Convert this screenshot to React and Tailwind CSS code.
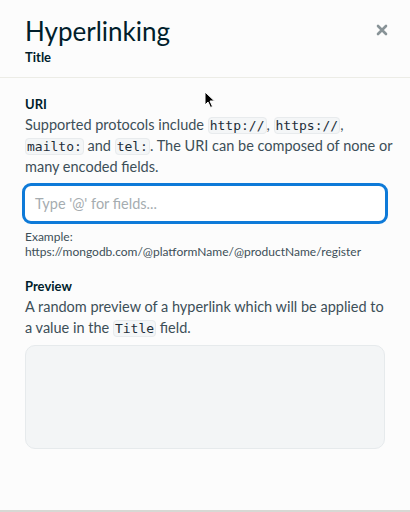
import React from 'react';

const Code = ({ children }) => (
  <code className="rounded-[4px] border border-[#e8ebed] bg-[#f4f6f7] px-[1px] py-0 font-['DejaVu_Sans_Mono',monospace] text-[13px] leading-[18px] text-[#1c2d38]">
    {children}
  </code>
);

const Cursor = () => (
  <svg className="absolute left-[204px] top-[91px]" width="12" height="18" viewBox="0 0 12 18">
    <path d="M1 1 L1 14 L4 11 L6.5 16.5 L8.5 15.5 L6 10 L10.5 10 Z" fill="#000" stroke="#fff" strokeWidth="1" />
  </svg>
);

export default function App() {
  return (
    <div className="relative h-[512px] w-[410px] overflow-hidden border-b-2 border-[#d8d8d4] bg-[#fcfcfc] font-['Lato',sans-serif] text-[#1c2d38]">
      <div className="flex items-start justify-between px-[25px] pt-[15px]">
        <div className="flex flex-col">
          <h1 className="text-[26px] leading-[32px] text-[#001e2b]">Hyperlinking</h1>
          <p className="mt-[2px] text-[13px] font-bold leading-[16px] text-[#001e2b]">Title</p>
        </div>
        <button className="mt-[9px] mr-[-3px] text-[#889397]">
          <svg width="12" height="12" viewBox="0 0 12 12">
            <path d="M2 2 L10 10 M10 2 L2 10" stroke="currentColor" strokeWidth="2.6" strokeLinecap="round" />
          </svg>
        </button>
      </div>

      <div className="mt-[12px] border-t border-[#ecece6]" />

      <div className="flex flex-col px-[25px] pt-[17px]">
        <p className="text-[13px] font-bold leading-[18px] text-[#001e2b]">URI</p>
        <p className="mt-[1px] mr-[-16px] text-[14.5px] leading-[21px] text-[#3d4f58]">
          Supported protocols include <Code>http://</Code>, <Code>https://</Code>, <Code>mailto:</Code> and <Code>tel:</Code>. The URI can be composed of none or many encoded fields.
        </p>

        <div className="mt-[6px] -mx-[3px] flex h-[41px] items-center rounded-[9px] border-[3px] border-[#0e7ad8] bg-white px-[10px]">
          <span className="text-[14.5px] text-[#a5acb0]">Type '@' for fields...</span>
        </div>

        <p className="mt-[5px] text-[12px] leading-[15px] text-[#3d4f58]">Example:</p>
        <p className="text-[12px] leading-[15px] text-[#3d4f58]">https://mongodb.com/@platformName/@productName/register</p>

        <p className="mt-[18px] text-[13px] font-bold leading-[18px] text-[#001e2b]">Preview</p>
        <p className="mt-[1px] text-[14.5px] leading-[21px] text-[#3d4f58]">
          A random preview of a hyperlink which will be applied to a value in the <Code>Title</Code> field.
        </p>

        <div className="mt-[7px] h-[104px] rounded-[10px] border border-[#e6eaec] bg-[#f3f5f6]" />
      </div>

      <Cursor />
    </div>
  );
}
